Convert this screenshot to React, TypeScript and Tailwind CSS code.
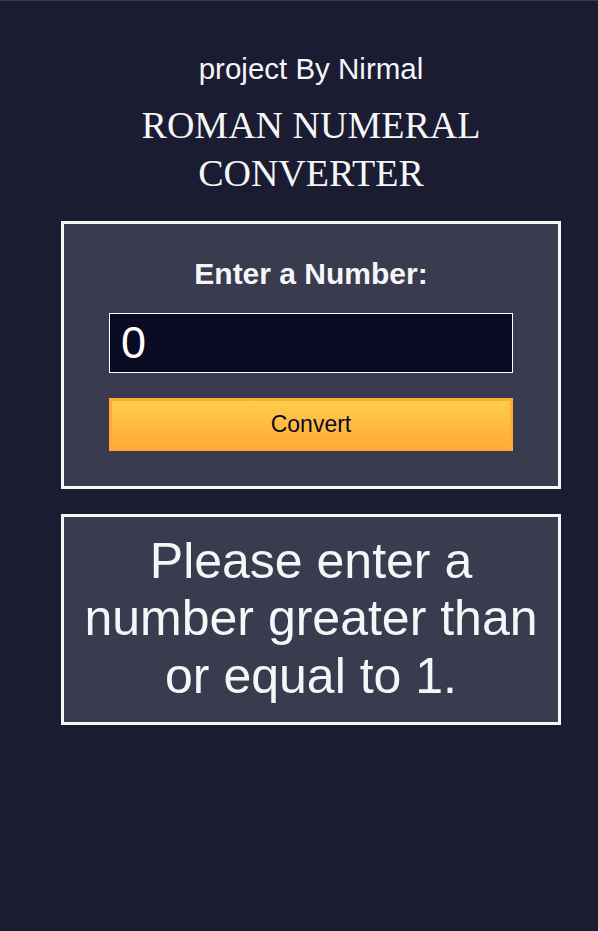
import React from 'react';

const App = () => {
  return (
    <div className="min-h-screen w-full bg-[#1b1b32] border-t border-[#3c3c3c] text-[#f5f6f7] font-['Liberation_Sans',Arial,sans-serif]">
      <div className="flex flex-col items-center pt-[51px] pl-[24px]">
        <p className="text-[29.5px] leading-[34px]">project By Nirmal</p>

        <h1 className="mt-[15px] text-center text-[38px] leading-[48px] font-['Liberation_Serif',serif]">
          ROMAN NUMERAL
          <br />
          CONVERTER
        </h1>

        <form
          className="mt-[24px] w-[500px] border-[3px] border-[#f5f6f7] bg-[#3b3b4f] pt-[33px] pb-[35px] flex flex-col items-center"
          onSubmit={(e) => e.preventDefault()}
        >
          <label htmlFor="number" className="text-[30px] font-bold leading-[34.5px]">
            Enter a Number:
          </label>
          <input
            id="number"
            type="number"
            defaultValue="0"
            className="mt-[21px] h-[60px] w-[404px] border border-white bg-[#0a0a23] pl-[11px] text-[45px] text-white outline-none"
          />
          <button
            type="submit"
            className="mt-[25px] h-[53px] w-[404px] border-[3px] border-[#feac32] bg-gradient-to-b from-[#fecc4c] to-[#ffac33] text-[23px] text-[#0a0a23]"
          >
            Convert
          </button>
        </form>

        <div className="mt-[25px] w-[500px] border-[3px] border-[#f5f6f7] bg-[#3b3b4f] pt-[16px] pb-[17px] px-[15px] text-center text-[50px] leading-[57.5px]">
          Please enter a number greater than or equal to 1.
        </div>
      </div>
    </div>
  );
};

export default App;
